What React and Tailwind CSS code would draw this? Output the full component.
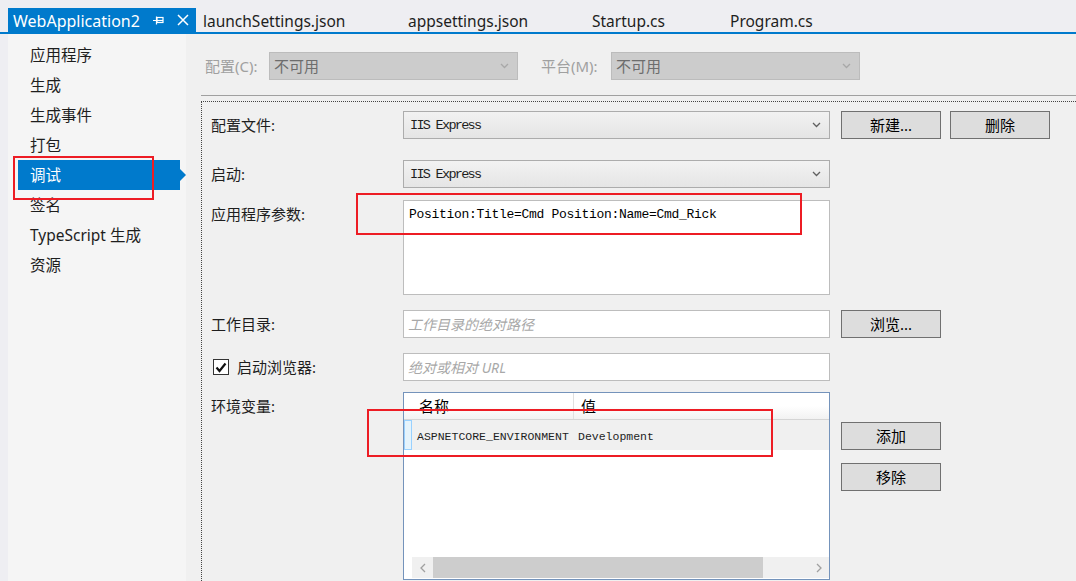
import React from 'react';

const ui = "font-['Noto_Sans','Noto_Sans_CJK_SC',sans-serif]";
const mono = "font-['Liberation_Mono','Noto_Sans_CJK_SC',monospace]";

function Chevron({ color = '#606060' }) {
  return (
    <svg width="9" height="6" viewBox="0 0 9 6" className="shrink-0">
      <path d="M1 1 L4.5 4.5 L8 1" fill="none" stroke={color} strokeWidth="1.3" />
    </svg>
  );
}

function Select({ value }) {
  return (
    <div className="w-[427px] h-[28px] border border-[#acacac] bg-linear-to-b from-[#f2f2f2] to-[#e5e5e5] flex items-center pl-[6px] pr-[8px]">
      <span className={`${mono} flex-1 pt-[3px] text-[13.5px] tracking-[-1.7px] text-[#1e1e1e]`}>{value}</span>
      <Chevron />
    </div>
  );
}

function Btn({ children }) {
  return (
    <div className={`${ui} w-[100px] h-[28px] border border-[#707070] bg-[#dddddd] flex items-center justify-center text-[15px] text-black`}>
      {children}
    </div>
  );
}

function Label({ children, top }) {
  return (
    <div className={`${ui} w-[192px] shrink-0 text-[15px] text-[#1e1e1e] ${top ? 'pt-[3px]' : 'h-[28px] flex items-center'}`}>
      {children}
    </div>
  );
}

const navItems = ['应用程序', '生成', '生成事件', '打包', '调试', '签名', 'TypeScript 生成', '资源'];

export default function App() {
  return (
    <div className={`${ui} relative w-[1076px] h-[581px] overflow-hidden bg-[#eeeef2] flex flex-col`}>
      {/* Tab strip */}
      <div className="h-[34px] shrink-0 pt-[8px] pl-[8px] flex border-b-2 border-[#007acc]">
        <div className="w-[188px] h-full bg-[#007acc] flex items-center pl-[5px] text-white text-[16px]">
          <span className="flex-1 pt-[2px]">WebApplication2</span>
          <svg width="11" height="9" viewBox="0 0 11 9" className="mr-[13px]">
            <path d="M0 4.5 H3 M3.5 0.5 V8.5" stroke="white" strokeWidth="1.2" fill="none" />
            <rect x="4" y="1.5" width="6" height="5" fill="none" stroke="white" strokeWidth="1.2" />
            <path d="M4 4.5 H10" stroke="white" strokeWidth="1.2" />
          </svg>
          <svg width="12" height="12" viewBox="0 0 12 12" className="mr-[7px]">
            <path d="M1 1 L11 11 M11 1 L1 11" stroke="white" strokeWidth="1.5" />
          </svg>
        </div>
        <div className="flex items-center pt-[3px] text-[15.5px] text-[#1e1e1e]">
          <span className="w-[212px] pl-[7px]">launchSettings.json</span>
          <span className="w-[184px]">appsettings.json</span>
          <span className="w-[138px]">Startup.cs</span>
          <span>Program.cs</span>
        </div>
      </div>

      {/* Body */}
      <div className="flex flex-1 min-h-0 pl-[8px]">
        {/* Sidebar */}
        <div className="w-[178px] shrink-0 bg-[#f5f5f5] pt-[6px]">
          {navItems.map((label) =>
            label === '调试' ? (
              <div key={label} className="flex items-center h-[30px] ml-[10px]">
                <div className="w-[162px] h-full bg-[#007acc] text-white text-[15.5px] flex items-center pl-[12px] pt-[2px]">{label}</div>
                <div className="w-0 h-0 border-y-[6px] border-y-transparent border-l-[6px] border-l-[#007acc]" />
              </div>
            ) : (
              <div key={label} className="h-[30px] flex items-center pl-[22px] pt-[2px] text-[15.5px] text-[#1e1e1e]">{label}</div>
            )
          )}
        </div>

        {/* Content */}
        <div className="flex-1 bg-[#f0f0f0] flex flex-col pt-[18px]">
          <div className="flex items-center pl-[19px] text-[15px] text-[#a0a0a0]">
            <span className="w-[64px]">配置(C):</span>
            <div className="w-[249px] h-[28px] bg-[#cccccc] border border-[#bcbcbc] flex items-center pl-[4px] pr-[8px]">
              <span className="flex-1 text-[#6d6d6d]">不可用</span>
              <Chevron color="#a8a8a8" />
            </div>
            <span className="ml-[23px] w-[70px]">平台(M):</span>
            <div className="w-[249px] h-[28px] bg-[#cccccc] border border-[#bcbcbc] flex items-center pl-[4px] pr-[8px]">
              <span className="flex-1 text-[#6d6d6d]">不可用</span>
              <Chevron color="#a8a8a8" />
            </div>
          </div>

          <div className="mt-[15px] ml-[15px] h-px bg-[#a0a0a0] shrink-0" />

          {/* Dotted group */}
          <div className="mt-[5px] ml-[15px] flex-1 border-l border-t border-dotted border-[#444] pt-[9px] pl-[9px] flex flex-col">
            <div className="flex items-center">
              <Label>配置文件:</Label>
              <Select value="IIS Express" />
              <div className="ml-[11px] flex gap-[9px]">
                <Btn>新建...</Btn>
                <Btn>删除</Btn>
              </div>
            </div>

            <div className="flex items-center mt-[21px]">
              <Label>启动:</Label>
              <Select value="IIS Express" />
            </div>

            <div className="flex mt-[12px]">
              <Label top>应用程序参数:</Label>
              <div className="w-[427px] h-[95px] bg-white border border-[#bdbdbd] pl-[5px] pt-[1px] leading-[20px]">
                <span className={`${mono} text-[13px] tracking-[-0.3px] text-black`}>Position:Title=Cmd Position:Name=Cmd_Rick</span>
              </div>
            </div>

            <div className="flex items-center mt-[15px]">
              <Label>工作目录:</Label>
              <div className="w-[427px] h-[28px] bg-white border border-[#bdbdbd] flex items-center pl-[4px]">
                <span className="italic text-[14px] text-[#a8a8a8]">工作目录的绝对路径</span>
              </div>
              <div className="ml-[11px]">
                <Btn>浏览...</Btn>
              </div>
            </div>

            <div className="flex items-center mt-[15px]">
              <div className="w-[192px] shrink-0 flex items-center h-[28px] text-[15px] text-[#1e1e1e]">
                <div className="w-[16px] h-[16px] ml-[2px] mr-[8px] border border-[#333] bg-white flex items-center justify-center">
                  <svg width="12" height="11" viewBox="0 0 12 11">
                    <path d="M1.5 5.5 L4.5 9 L10.5 1.5" fill="none" stroke="#111" strokeWidth="2.2" />
                  </svg>
                </div>
                启动浏览器:
              </div>
              <div className="w-[427px] h-[28px] bg-white border border-[#bdbdbd] flex items-center pl-[4px]">
                <span className="italic text-[14px] text-[#a8a8a8]">绝对或相对 URL</span>
              </div>
            </div>

            <div className="flex mt-[11px] flex-1">
              <Label top>环境变量:</Label>
              {/* Grid */}
              <div className="w-[427px] h-[188px] shrink-0 bg-white border border-[#7493bb] flex flex-col">
                <div className="h-[27px] flex pl-[8px] bg-linear-to-b from-white from-50% to-[#f2f2f2] border-b border-[#d5d5d5] text-[15px] text-black">
                  <div className="w-[162px] border-r border-[#e0e0e0] pl-[7px] flex items-center">名称</div>
                  <div className="flex-1 pl-[7px] flex items-center">值</div>
                </div>
                <div className="h-[30px] flex bg-[#f0f0f0]">
                  <div className="w-[8px] bg-[#e5f3fb] border border-[#99d1ff]" />
                  <div className={`${mono} w-[162px] pl-[5px] pt-[3px] flex items-center text-[11.5px] text-[#1e1e1e]`}>ASPNETCORE_ENVIRONMENT</div>
                  <div className={`${mono} flex-1 pl-[4px] pt-[3px] flex items-center text-[11.5px] text-[#1e1e1e]`}>Development</div>
                </div>
                <div className="flex-1" />
                <div className="h-[21px] ml-[8px] mb-px flex bg-[#f0f0f0]">
                  <div className="w-[21px] flex items-center justify-center">
                    <svg width="6" height="10" viewBox="0 0 6 10">
                      <path d="M5 1 L1 5 L5 9" fill="none" stroke="#a0a0a0" strokeWidth="1.3" />
                    </svg>
                  </div>
                  <div className="w-[330px] bg-[#cdcdcd]" />
                  <div className="flex-1" />
                  <div className="w-[20px] flex items-center justify-center">
                    <svg width="6" height="10" viewBox="0 0 6 10">
                      <path d="M1 1 L5 5 L1 9" fill="none" stroke="#a0a0a0" strokeWidth="1.3" />
                    </svg>
                  </div>
                </div>
              </div>
              <div className="ml-[11px] pt-[30px] flex flex-col gap-[13px]">
                <Btn>添加</Btn>
                <Btn>移除</Btn>
              </div>
            </div>
          </div>
        </div>
      </div>

      {/* Red annotation boxes */}
      <div className="absolute left-[13px] top-[156px] w-[141px] h-[44px] border-2 border-[#ed1c24]" />
      <div className="absolute left-[356px] top-[193px] w-[446px] h-[42px] border-2 border-[#ed1c24]" />
      <div className="absolute left-[367px] top-[409px] w-[406px] h-[48px] border-2 border-[#ed1c24]" />
    </div>
  );
}
